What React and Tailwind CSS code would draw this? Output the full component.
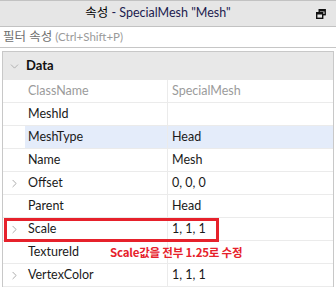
import { ChevronDown, ChevronRight } from 'lucide-react';

const rows = [
  { name: 'ClassName', value: 'SpecialMesh', muted: true },
  { name: 'MeshId', value: '' },
  { name: 'MeshType', value: 'Head', selected: true },
  { name: 'Name', value: 'Mesh' },
  { name: 'Offset', value: '0, 0, 0', expand: true },
  { name: 'Parent', value: 'Head' },
  { name: 'Scale', value: '1, 1, 1', expand: true },
  { name: 'TextureId', value: '' },
  { name: 'VertexColor', value: '1, 1, 1', expand: true },
];

const FloatIcon = () => (
  <svg width="10" height="10" viewBox="0 0 10 10" fill="none" stroke="#111" strokeWidth="1.4">
    <rect x="3.2" y="0.7" width="6" height="5" />
    <rect x="0.7" y="3.7" width="6" height="5.6" fill="#e6e6e6" />
    <line x1="0.7" y1="4.6" x2="6.7" y2="4.6" strokeWidth="1.8" />
    <line x1="3.2" y1="1.6" x2="9.2" y2="1.6" strokeWidth="1.8" />
  </svg>
);

const App = () => {
  return (
    <div className="relative w-[336px] h-[288px] overflow-hidden bg-white font-['Lato','Noto_Sans_CJK_KR',sans-serif] text-[12.5px]">
      <div className="h-[27px] bg-[#e6e6e6] border-t border-b border-[#c2c2c2] flex items-center">
        <div className="flex-1 text-center text-[12.5px] leading-none">
          <span className="text-black">속성</span>
          <span className="text-[#1c1c4f]"> - SpecialMesh "Mesh"</span>
        </div>
        <div className="w-[20px] flex justify-start">
          <FloatIcon />
        </div>
      </div>

      <div className="h-[21px] border-b border-[#c6c6c6] flex items-center pl-[3px] text-[12.5px]">
        <span className="text-[#6f6f6f]">필터 속성</span>
        <span className="text-[#9a9a9a] ml-[3px] text-[11.5px]">(Ctrl+Shift+P)</span>
      </div>

      <div className="mt-[3px] ml-[2px] mr-[2px] border-l border-t border-r border-[#c8c8c8]">
        <div className="h-[28px] bg-[#e8e8e8] flex items-center">
          <div className="w-[23px] flex justify-center">
            <ChevronDown size={13} strokeWidth={1.3} className="text-[#9a9a9a]" />
          </div>
          <span className="font-bold text-[13px] text-[#111]">Data</span>
        </div>
        {rows.map((row) => (
          <div key={row.name} className="h-[23px] flex border-b border-[#ebebeb]">
            <div className="w-[22px] flex items-center justify-center">
              {row.expand && <ChevronRight size={13} strokeWidth={1.3} className="text-[#8a8a8a]" />}
            </div>
            <div
              className={`w-[143px] flex items-center pl-[3px] border-r border-[#ebebeb] ${
                row.selected ? 'bg-[#e4ecfa]' : ''
              } ${row.muted ? 'text-[#9b9b9b]' : 'text-[#1a1a1a]'}`}
            >
              {row.name}
            </div>
            <div
              className={`flex-1 flex items-center pl-[4px] ${row.selected ? 'bg-[#e4ecfa]' : ''} ${
                row.muted ? 'text-[#9b9b9b]' : 'text-[#1a1a1a]'
              }`}
            >
              {row.value}
            </div>
          </div>
        ))}
      </div>

      <div className="absolute left-[4px] top-[218px] w-[215px] h-[24px] border-[3px] border-[#e6212b]" />
      <div className="absolute left-[110px] top-[243px] text-[11.5px] font-bold text-[#e6212b] tracking-[-0.2px] leading-[18px] font-['Noto_Sans_CJK_KR',sans-serif]">
        Scale값을 전부 1.25로 수정
      </div>
    </div>
  );
};

export default App;
